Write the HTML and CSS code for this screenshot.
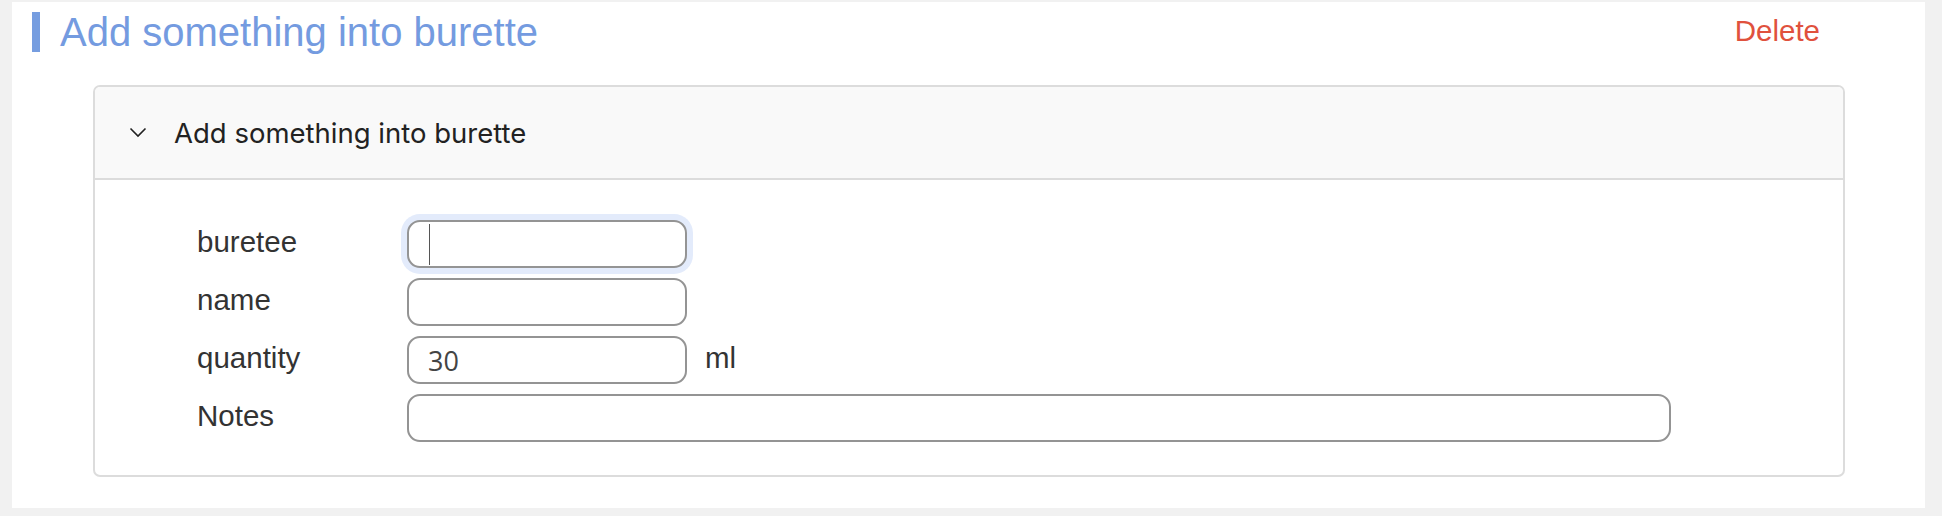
FILE: index.html
```html
<!DOCTYPE html>
<html>
<head>
<meta charset="utf-8">
<link rel="stylesheet" href="styles.css">
</head>
<body>
<div class="panel">
  <div class="panel-head">
    <span class="bar"></span>
    <h1 class="title">Add something into burette</h1>
    <a class="delete">Delete</a>
  </div>
  <div class="card">
    <div class="card-head">
      <svg class="chev" width="18" height="11" viewBox="0 0 18 11"><polyline points="1.5,1.5 9,9 16.5,1.5" fill="none" stroke="#222" stroke-width="1.6"/></svg>
      <span class="card-title">Add something into burette</span>
    </div>
    <div class="card-body">
      <div class="row">
        <label class="lbl">buretee</label>
        <span class="field">
          <input class="inp focused" type="text" value="">
          <span class="caret"></span>
        </span>
      </div>
      <div class="row">
        <label class="lbl">name</label>
        <input class="inp" type="text" value="">
      </div>
      <div class="row">
        <label class="lbl">quantity</label>
        <input class="inp" type="text" value="30">
        <span class="unit">ml</span>
      </div>
      <div class="row">
        <label class="lbl">Notes</label>
        <input class="inp wide" type="text" value="">
      </div>
    </div>
  </div>
</div>
</body>
</html>
```
FILE: styles.css
```css
html, body {
  margin: 0;
  padding: 0;
}
body {
  background: #f1f1f1;
  padding: 2px 17px 8px 12px;
  font-family: "Liberation Sans", Arial, sans-serif;
}
.panel {
  background: #ffffff;
  padding: 10px 80px 31px 20px;
  height: 506px;
  box-sizing: border-box;
}
.panel-head {
  display: flex;
  align-items: center;
  height: 40px;
  padding-right: 25px;
}
.bar {
  width: 8px;
  height: 40px;
  background: #769de0;
  flex: none;
}
.title {
  margin: 0 0 0 20px;
  font-size: 40px;
  font-weight: normal;
  color: #749be0;
  line-height: normal;
}
.delete {
  margin-left: auto;
  margin-bottom: 3px;
  font-size: 29.5px;
  color: #e0513d;
  cursor: pointer;
}
.card {
  margin: 33px 0 0 61px;
  border: 2px solid #dcdcdc;
  border-radius: 7px;
  overflow: hidden;
}
.card-head {
  display: flex;
  align-items: center;
  height: 91px;
  background: #f9f9f9;
  border-bottom: 2px solid #dcdcdc;
  padding-left: 34px;
}
.chev {
  flex: none;
  display: block;
}
.card-title {
  margin-left: 27px;
  font-family: Inter, "Noto Sans", sans-serif;
  font-size: 27.5px;
  color: #222;
}
.card-body {
  padding: 40px 0 33px 102px;
  display: flex;
  flex-direction: column;
  gap: 10px;
}
.row {
  display: flex;
  align-items: center;
  height: 48px;
}
.lbl {
  width: 210px;
  flex: none;
  font-size: 29.5px;
  color: #333;
  margin-bottom: 5px;
}
.field {
  position: relative;
  display: block;
}
.inp {
  display: block;
  box-sizing: border-box;
  width: 280px;
  height: 48px;
  border: 2px solid #949494;
  border-radius: 13px;
  padding: 0 0 0 19px;
  margin: 0;
  font-family: "Open Sans", "Noto Sans", sans-serif;
  font-size: 27px;
  color: #444;
  background: #fff;
  outline: none;
}
.inp.focused {
  box-shadow: 0 0 0 6px #e3ebfb;
}
.inp.wide {
  width: 1264px;
}
.caret {
  position: absolute;
  left: 22px;
  top: 4px;
  width: 1px;
  height: 41px;
  background: #555;
}
.unit {
  margin-left: 18px;
  font-size: 29.5px;
  color: #333;
  margin-bottom: 5px;
}
```
